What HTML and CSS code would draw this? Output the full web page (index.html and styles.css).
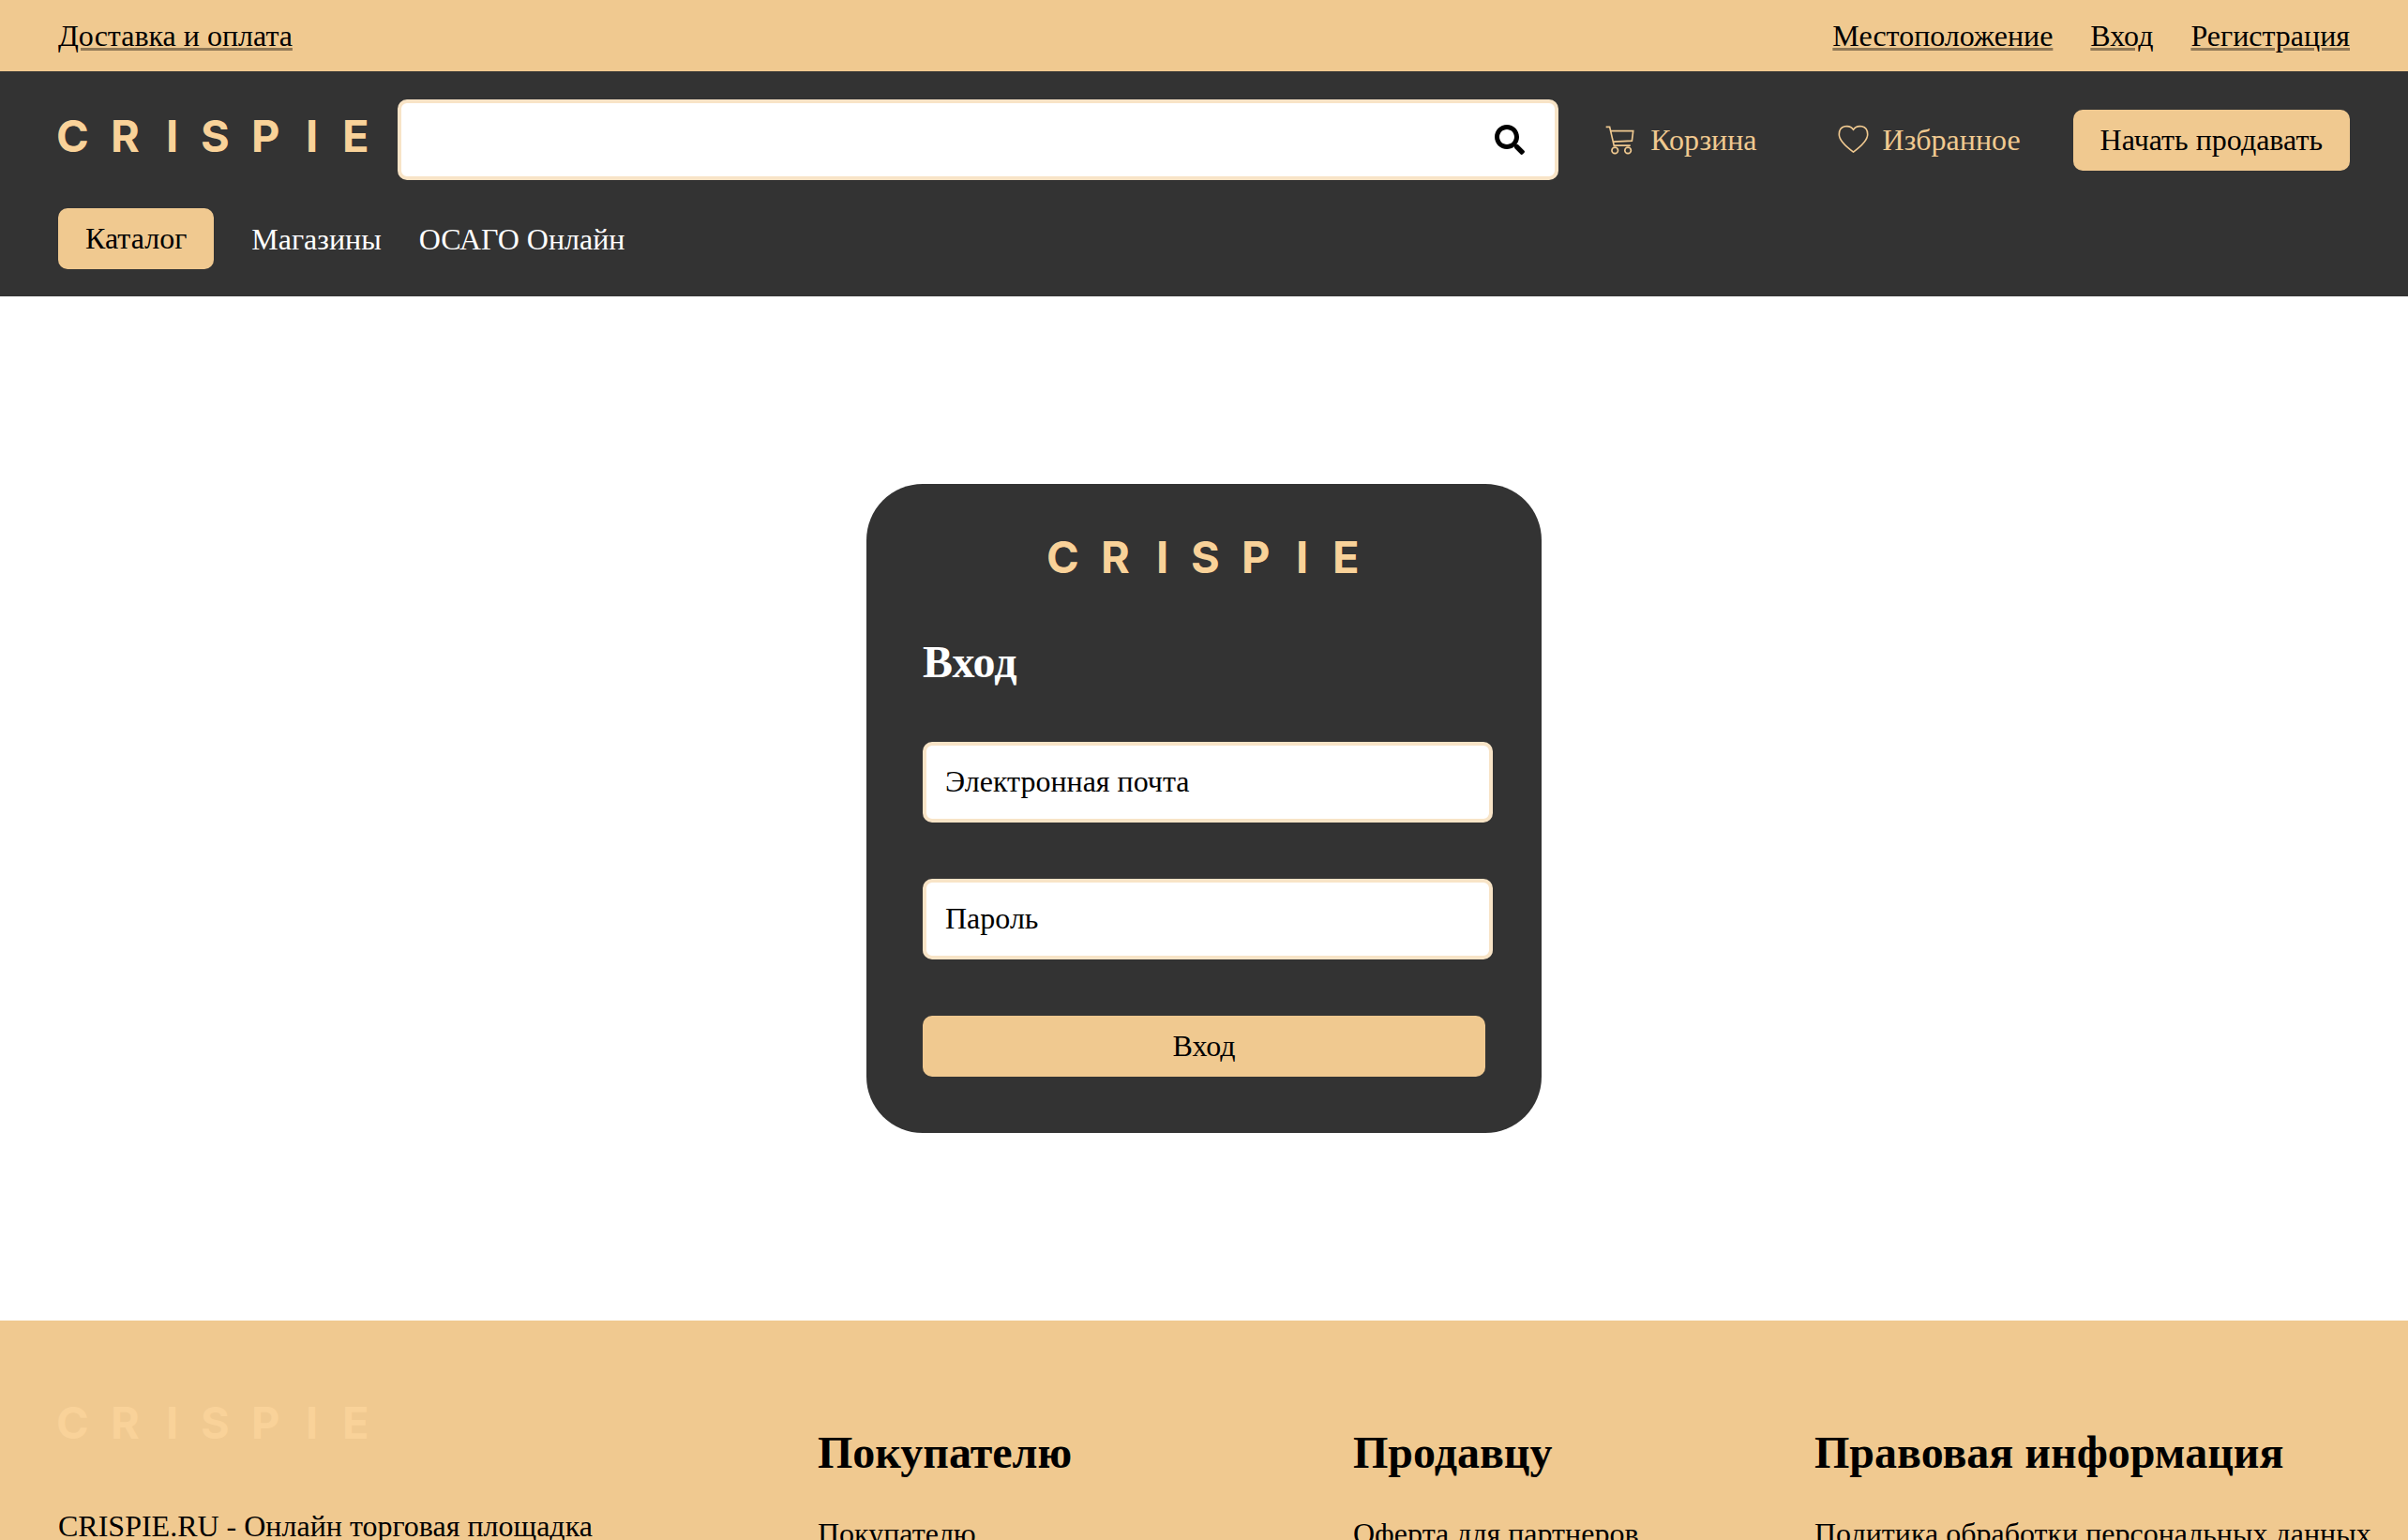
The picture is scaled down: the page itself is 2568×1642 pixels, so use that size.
FILE: index.html
```html
<!DOCTYPE html>
<html lang="ru">
<head>
  <meta charset="utf-8">
  <meta name="viewport" content="width=device-width, initial-scale=1">
  <title>CRISPIE — Вход</title>
  <link rel="stylesheet" href="styles.css">
</head>
<body>
  <nav class="topbar">
    <a href="#">Доставка и оплата</a>
    <div class="topbar-account">
      <a href="#">Местоположение</a>
      <a href="#">Вход</a>
      <a href="#">Регистрация</a>
    </div>
  </nav>

  <header class="header">
    <div class="header-main">
      <a class="logo-link" href="#">
        <svg class="logo" viewBox="0 0 332 44" role="img" aria-label="CRISPIE"><text y="35" x="-2 56 115 152 206 264 303">CRISPIE</text></svg>
      </a>
      <form class="search" role="search">
        <input class="search-input" type="search" aria-label="Поиск">
        <button class="search-button" type="submit" aria-label="Найти">
          <svg class="search-icon" viewBox="0 0 512 512"><path d="M505 442.700 405.300 343c-4.500-4.500-10.600-7-17-7H372c27.600-35.300 44-79.700 44-128C416 93.100 322.900 0 208 0S0 93.100 0 208s93.100 208 208 208c48.300 0 92.700-16.400 128-44v16.300c0 6.400 2.500 12.500 7 17l99.700 99.700c9.400 9.400 24.600 9.400 33.900 0l28.300-28.300c9.400-9.400 9.400-24.600.1-34zM208 336c-70.700 0-128-57.200-128-128 0-70.700 57.200-128 128-128 70.700 0 128 57.200 128 128 0 70.700-57.200 128-128 128z"/></svg>
        </button>
      </form>
      <div class="header-actions">
        <a class="action" href="#">
          <svg class="action-icon" viewBox="32 70 100 100"><path d="M34 77H46L60 137H113M49 90H122L118 122L57 125"/><circle cx="63" cy="153" r="10"/><circle cx="105" cy="153" r="10"/></svg>
          Корзина
        </a>
        <a class="action" href="#">
          <svg class="action-icon" viewBox="777 66 102 102"><path d="M828 82C816 65 781 66 781 98C781 120 806 140 828 156C850 140 875 120 875 98C875 66 840 65 828 82Z"/></svg>
          Избранное
        </a>
      </div>
      <button class="button" type="button">Начать продавать</button>
    </div>
    <nav class="header-nav">
      <button class="button" type="button">Каталог</button>
      <a href="#">Магазины</a>
      <a href="#">ОСАГО Онлайн</a>
    </nav>
  </header>

  <main class="page">
    <form class="login">
      <svg class="logo login-logo" viewBox="0 0 332 44" role="img" aria-label="CRISPIE"><text y="35" x="-2 56 115 152 206 264 303">CRISPIE</text></svg>
      <h1 class="title">Вход</h1>
      <input class="field" type="email" placeholder="Электронная почта" aria-label="Электронная почта">
      <input class="field" type="password" placeholder="Пароль" aria-label="Пароль">
      <button class="button" type="submit">Вход</button>
    </form>
  </main>

  <footer class="footer">
    <section class="footer-about">
      <svg class="logo" viewBox="0 0 332 44" role="img" aria-label="CRISPIE"><text y="35" x="-2 56 115 152 206 264 303">CRISPIE</text></svg>
      <p>CRISPIE.RU - Онлайн торговая площадка</p>
    </section>
    <section class="footer-column">
      <h2 class="title">Покупателю</h2>
      <a href="#">Покупателю</a>
    </section>
    <section class="footer-column">
      <h2 class="title">Продавцу</h2>
      <a href="#">Оферта для партнеров</a>
    </section>
    <section class="footer-column">
      <h2 class="title">Правовая информация</h2>
      <a href="#">Политика обработки персональных данных</a>
    </section>
  </footer>
</body>
</html>
```
FILE: styles.css
```css
:root {
  --sand: #f0c990;
  --sand-light: #f9d299;
  --cream: #f8e4c7;
  --dark: #333333;
}

* {
  box-sizing: border-box;
}

body {
  margin: 0;
  background: #fff;
  color: #000;
  font-family: "Liberation Serif", "Times New Roman", serif;
  font-size: 32px;
  line-height: 36px;
}

a {
  color: inherit;
  text-decoration: none;
}

p,
h1,
h2 {
  margin: 0;
}

input,
button {
  font: inherit;
  color: inherit;
}

.title {
  font-size: 48px;
  line-height: 51px;
  font-weight: 700;
}

.button {
  padding: 14px 29px 15px;
  border: 0;
  border-radius: 10px;
  background: var(--sand);
  white-space: nowrap;
  cursor: pointer;
}

.logo {
  display: block;
  width: 332px;
  height: 44px;
  overflow: visible;
  fill: var(--sand-light);
  font-family: Inter, "Liberation Sans", sans-serif;
  font-size: 47px;
  font-weight: 700;
}

/* Top bar */
.topbar {
  display: flex;
  justify-content: space-between;
  padding: 20px 62px;
  background: var(--sand);
}

.topbar a {
  text-decoration: underline;
  text-decoration-color: rgba(0, 0, 0, 0.4);
  text-decoration-thickness: 3px;
  text-underline-offset: 2px;
}

.topbar-account {
  display: flex;
  gap: 40px;
}

/* Header */
.header {
  display: flex;
  flex-direction: column;
  gap: 30px;
  padding: 30px 62px 29px;
  background: var(--dark);
}

.header-main {
  display: flex;
  align-items: center;
}

.search {
  display: flex;
  flex: 1;
  height: 86px;
  margin-left: 30px;
  border: 4px solid var(--cream);
  border-radius: 10px;
  background: #fff;
}

.search-input {
  flex: 1;
  min-width: 0;
  padding: 0 20px;
  border: 0;
  outline: 0;
  background: transparent;
}

.search-button {
  display: flex;
  align-items: center;
  padding: 0 32px;
  border: 0;
  background: transparent;
  cursor: pointer;
}

.search-icon {
  width: 32px;
  height: 32px;
}

.header-actions {
  display: flex;
  gap: 86px;
  margin: 0 56px 0 50px;
  color: var(--sand);
}

.action {
  display: flex;
  align-items: center;
  gap: 15px;
}

.action-icon {
  width: 33px;
  height: 33px;
  fill: none;
  stroke: currentColor;
  stroke-width: 5;
}

.header-nav {
  display: flex;
  align-items: center;
  gap: 40px;
  color: #fff;
}

.header-nav .button {
  color: #000;
}

/* Login card */
.page {
  display: flex;
  justify-content: center;
  padding: 200px 0;
}

.login {
  display: flex;
  flex-direction: column;
  gap: 60px;
  width: 720px;
  padding: 60px;
  border-radius: 60px;
  background: var(--dark);
}

.login-logo {
  align-self: center;
}

.login .title {
  color: #fff;
}

.field {
  width: 608px;
  height: 86px;
  padding: 0 20px 2px;
  border: 4px solid var(--cream);
  border-radius: 10px;
  background: #fff;
}

.field::placeholder {
  color: #000;
  opacity: 1;
}

/* Footer */
.footer {
  display: grid;
  grid-template-columns: minmax(0, 810fr) minmax(0, 571fr) minmax(0, 492fr) minmax(0, 571fr);
  padding: 91px 62px 0;
  background: var(--sand);
  white-space: nowrap;
}

.footer-about {
  display: flex;
  flex-direction: column;
  gap: 66px;
}

.footer-column {
  display: flex;
  flex-direction: column;
  gap: 43px;
  padding-top: 24px;
}
```
